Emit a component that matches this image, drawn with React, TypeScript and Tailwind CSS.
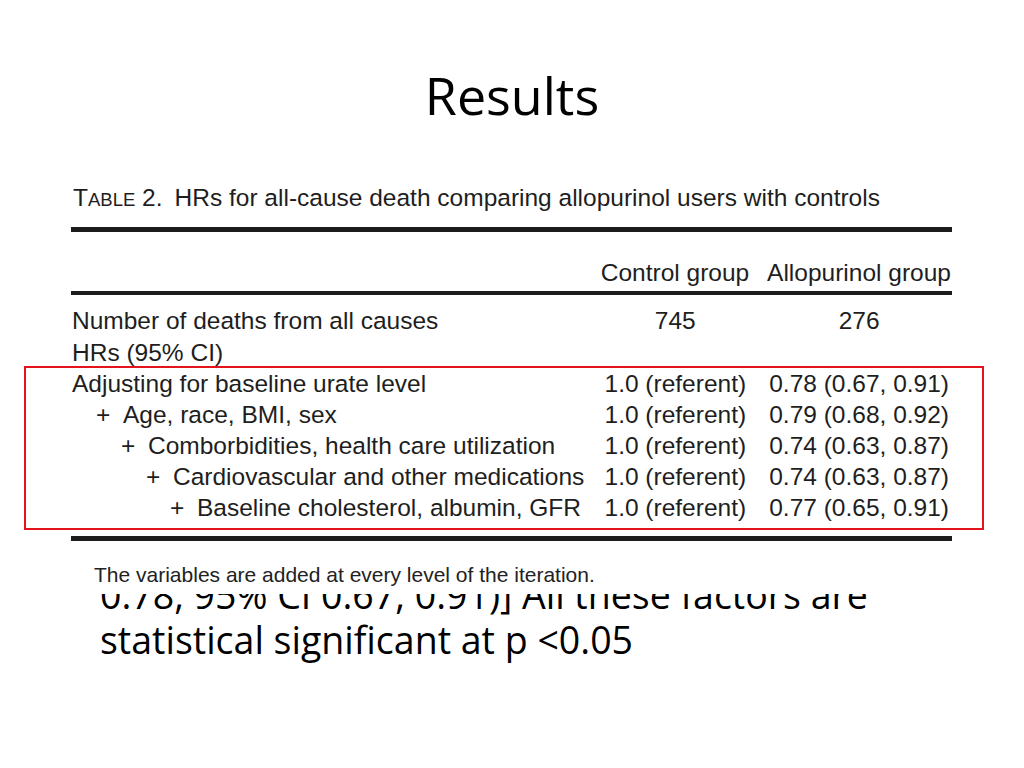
const rows = [
  { indent: 0, label: "Adjusting for baseline urate level", control: "1.0 (referent)", allo: "0.78 (0.67, 0.91)" },
  { indent: 1, label: "Age, race, BMI, sex", control: "1.0 (referent)", allo: "0.79 (0.68, 0.92)" },
  { indent: 2, label: "Comborbidities, health care utilization", control: "1.0 (referent)", allo: "0.74 (0.63, 0.87)" },
  { indent: 3, label: "Cardiovascular and other medications", control: "1.0 (referent)", allo: "0.74 (0.63, 0.87)" },
  { indent: 4, label: "Baseline cholesterol, albumin, GFR", control: "1.0 (referent)", allo: "0.77 (0.65, 0.91)" },
];

const indentClass = ["pl-0", "pl-[24px]", "pl-[49px]", "pl-[74px]", "pl-[98px]"];

function Row({ label, control, allo, className = "" }: { label: React.ReactNode; control: string; allo: string; className?: string }) {
  return (
    <div className={`flex leading-[31px] ${className}`}>
      <div className="w-[519px] whitespace-nowrap">{label}</div>
      <div className="w-[170px] text-center whitespace-nowrap">{control}</div>
      <div className="ml-[6px] w-[186px] text-center whitespace-nowrap">{allo}</div>
    </div>
  );
}

function TableFigure() {
  return (
    <div className="absolute left-[60px] top-[165px] w-[900px] h-[429px] bg-white pt-[17px] text-[24.5px] text-[#1e1e1e] font-['Liberation_Sans',Arial,sans-serif]">
      <div className="ml-[11px] w-[881px]">
        {/* caption */}
        <div className="leading-[31px] pl-[2px] whitespace-nowrap">
          T<span className="text-[18.5px]">ABLE</span> 2.<span className="ml-[12px]">HRs for all-cause death comparing allopurinol users with controls</span>
        </div>
        <div className="mt-[12px] h-[5px] bg-[#1c1c1c]" />

        <Row className="mt-[25px]" label="" control="Control group" allo="Allopurinol group" />
        <div className="mt-[3px] h-[4px] bg-[#1c1c1c]" />

        <div className="pl-[1px]">
          <Row className="mt-[10px]" label="Number of deaths from all causes" control="745" allo="276" />
          <Row className="mt-[1px]" label="HRs (95% CI)" control="" allo="" />
          {rows.map((r) => (
            <Row
              key={r.label}
              control={r.control}
              allo={r.allo}
              label={
                <div className={`flex ${indentClass[r.indent]}`}>
                  {r.indent > 0 && <span className="w-[27px]">+</span>}
                  <span>{r.label}</span>
                </div>
              }
            />
          ))}
        </div>

        <div className="mt-[13px] h-[5px] bg-[#1c1c1c]" />
        <div className="mt-[21px] pl-[23px] text-[21px] leading-[26px] text-[#222] whitespace-nowrap">
          The variables are added at every level of the iteration.
        </div>
      </div>
    </div>
  );
}

export default function App() {
  return (
    <div className="relative w-[1024px] h-[768px] bg-white overflow-hidden text-black font-['Open_Sans',sans-serif]">
      <h1 className="pt-[63px] text-center text-[52px] leading-[64px] font-normal">Results</h1>

      <div className="mt-[445px] pl-[100px] text-[37.5px] leading-[45px] whitespace-nowrap">
        <p>0.78, 95% CI 0.67, 0.91)] All these factors are</p>
        <p>statistical significant at p &lt;0.05</p>
      </div>

      <TableFigure />

      {/* highlight box */}
      <div className="absolute left-[24px] top-[366px] w-[960px] h-[164px] border-2 border-[#e3141b]" />
    </div>
  );
}
